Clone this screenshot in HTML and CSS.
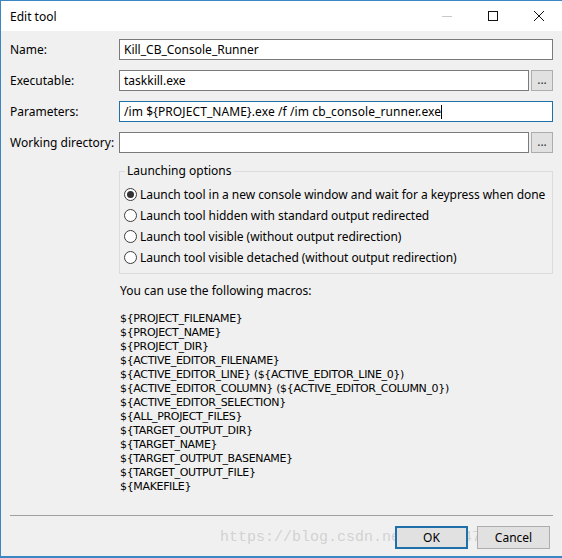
FILE: index.html
```html
<!DOCTYPE html>
<html>
<head>
<meta charset="utf-8">
<link rel="stylesheet" href="styles.css">
</head>
<body>
<div class="window">
  <div class="titlebar">
    <span class="title">Edit tool</span>
    <div class="controls">
      <span class="ctl min"><svg width="12" height="12" viewBox="0 0 12 12"><path d="M1 6.5H11" stroke="#c8c8c8" stroke-width="1"/></svg></span>
      <span class="ctl max"><svg width="12" height="12" viewBox="0 0 12 12"><rect x="1.5" y="1.5" width="9" height="9" fill="none" stroke="#111" stroke-width="1"/></svg></span>
      <span class="ctl close"><svg width="12" height="12" viewBox="0 0 12 12"><path d="M1 1L11 11M11 1L1 11" stroke="#111" stroke-width="1"/></svg></span>
    </div>
  </div>
  <div class="content">
    <div class="row">
      <label class="lbl">Name:</label>
      <div class="field">Kill_CB_Console_Runner</div>
    </div>
    <div class="row">
      <label class="lbl">Executable:</label>
      <div class="field">taskkill.exe</div>
      <div class="browse">...</div>
    </div>
    <div class="row">
      <label class="lbl">Parameters:</label>
      <div class="field focus">/im ${PROJECT_NAME}.exe /f /im cb_console_runner.exe<span class="caret"></span></div>
    </div>
    <div class="row">
      <label class="lbl">Working directory:</label>
      <div class="field"></div>
      <div class="browse">...</div>
    </div>
    <div class="lower">
      <fieldset class="group">
        <legend>Launching options</legend>
        <div class="radio"><span class="dot checked"></span>Launch tool in a new console window and wait for a keypress when done</div>
        <div class="radio"><span class="dot"></span>Launch tool hidden with standard output redirected</div>
        <div class="radio"><span class="dot"></span>Launch tool visible (without output redirection)</div>
        <div class="radio"><span class="dot"></span>Launch tool visible detached (without output redirection)</div>
      </fieldset>
      <p class="hint">You can use the following macros:</p>
      <div class="macros">
        <div>${PROJECT_FILENAME}</div>
        <div>${PROJECT_NAME}</div>
        <div>${PROJECT_DIR}</div>
        <div>${ACTIVE_EDITOR_FILENAME}</div>
        <div>${ACTIVE_EDITOR_LINE} (${ACTIVE_EDITOR_LINE_0})</div>
        <div>${ACTIVE_EDITOR_COLUMN} (${ACTIVE_EDITOR_COLUMN_0})</div>
        <div>${ACTIVE_EDITOR_SELECTION}</div>
        <div>${ALL_PROJECT_FILES}</div>
        <div>${TARGET_OUTPUT_DIR}</div>
        <div>${TARGET_NAME}</div>
        <div>${TARGET_OUTPUT_BASENAME}</div>
        <div>${TARGET_OUTPUT_FILE}</div>
        <div>${MAKEFILE}</div>
      </div>
    </div>
    <div class="sep"></div>
    <div class="buttons">
      <span class="watermark">https://blog.csdn.net/qq_37477</span>
      <div class="btn default">OK</div>
      <div class="btn">Cancel</div>
    </div>
  </div>
</div>
</body>
</html>
```
FILE: styles.css
```css
* { box-sizing: border-box; }
html, body { margin: 0; padding: 0; }
body {
  width: 562px;
  height: 558px;
  overflow: hidden;
  font-family: "Noto Sans", "Open Sans", sans-serif;
  font-size: 12px;
  color: #000;
}
.window {
  width: 562px;
  height: 558px;
  border-top: 1px solid #3a87c4;
  border-left: 1px solid #3a87c4;
  border-bottom: 2px solid #3a87c4;
  background: #f0f0f0;
  display: flex;
  flex-direction: column;
}
.titlebar {
  height: 30px;
  background: #fff;
  display: flex;
  align-items: center;
  padding-left: 9px;
  flex: none;
}
.title { font-size: 12px; padding-top: 1px; }
.controls { margin-left: auto; display: flex; height: 30px; }
.ctl { width: 46px; display: flex; align-items: center; justify-content: center; }
.ctl svg { display: block; }
.content {
  flex: 1;
  display: flex;
  flex-direction: column;
  padding: 8px 9px 0 9px;
}
.row {
  display: flex;
  align-items: center;
  height: 21px;
  margin-bottom: 10px;
}
.lbl { width: 109px; flex: none; }
.field {
  flex: 1;
  height: 21px;
  border: 1px solid #7a7a7a;
  background: #fff;
  padding: 0 4px;
  line-height: 19px;
  white-space: nowrap;
}
.field.focus { border-color: #1f6fa8; letter-spacing: 0.1px; }
.caret {
  display: inline-block;
  width: 1px;
  height: 14px;
  background: #000;
  vertical-align: -3px;
}
.browse {
  flex: none;
  width: 22px;
  height: 21px;
  margin-left: 2px;
  border: 1px solid #adadad;
  background: #e1e1e1;
  text-align: center;
  line-height: 18px;
  font-size: 12px;
  color: #333;
}
.lower { padding-left: 109px; }
.group {
  margin: 1px 0 0 0;
  padding: 6px 0 9px 4px;
  border: 1px solid #dcdcdc;
  height: 110px;
}
.group legend {
  padding: 0 2px;
  margin-left: 1px;
  line-height: 14px;
}
.radio {
  display: flex;
  align-items: center;
  height: 21px;
  white-space: nowrap;
  letter-spacing: -0.05px;
}
.dot {
  width: 13px;
  height: 13px;
  border: 1px solid #3c3c3c;
  border-radius: 50%;
  background: #fff;
  margin-right: 3px;
  flex: none;
  position: relative;
}
.dot.checked::after {
  content: "";
  position: absolute;
  left: 2px;
  top: 2px;
  width: 7px;
  height: 7px;
  border-radius: 50%;
  background: #333;
}
.hint { margin: 10px 0 0 1px; line-height: 14px; }
.macros {
  margin: 14px 0 0 1px;
  font-family: "DejaVu Sans", sans-serif;
  font-size: 11px;
  line-height: 14px;
  letter-spacing: -0.34px;
}
.sep {
  margin-top: auto;
  height: 1px;
  background: #a0a0a0;
}
.buttons {
  position: relative;
  display: flex;
  justify-content: flex-end;
  gap: 9px;
  padding: 10px 3px 0 0;
  height: 40px;
}
.btn {
  position: relative;
  width: 73px;
  height: 23px;
  border: 1px solid #adadad;
  background: #e1e1e1;
  text-align: center;
  line-height: 21px;
}
.btn.default { border: 2px solid #1f6fa8; line-height: 19px; }
.watermark {
  position: absolute;
  left: 210px;
  top: 10px;
  font-family: "Liberation Mono", monospace;
  font-size: 15px;
  line-height: 23px;
  color: rgba(170,170,170,0.45);
  white-space: nowrap;
  pointer-events: none;
}
```
